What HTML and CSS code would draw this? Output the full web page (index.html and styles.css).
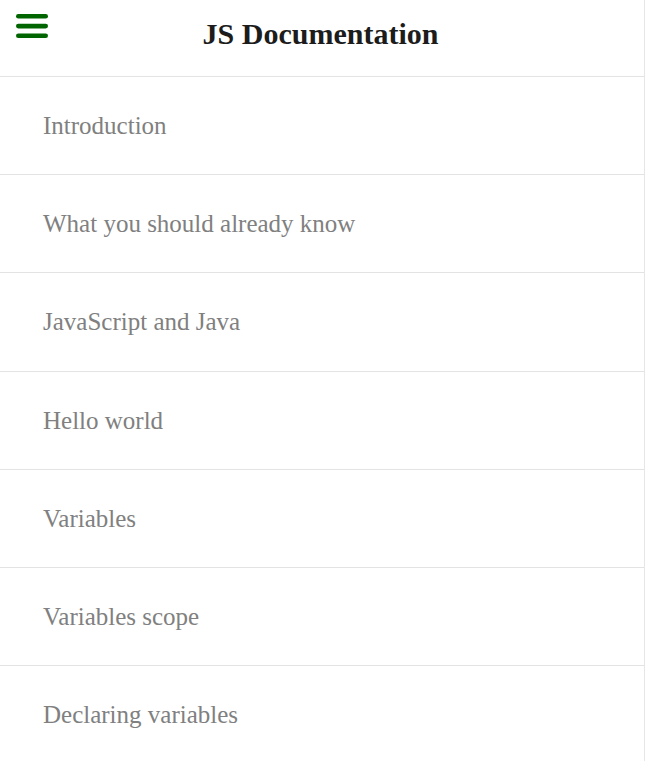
FILE: index.html
```html
<!DOCTYPE html>
<html lang="en">
<head>
<meta charset="utf-8">
<title>JS Documentation</title>
<link rel="stylesheet" href="styles.css">
</head>
<body>
<nav class="navbar" id="navbar">
  <header class="nav-header">
    <button class="menu-btn" aria-label="Menu">
      <svg width="32" height="24" viewBox="0 0 32 24" aria-hidden="true">
        <rect x="0" y="0" width="32" height="4.6" rx="2.3" fill="#006400"/>
        <rect x="0" y="9.8" width="32" height="4.6" rx="2.3" fill="#006400"/>
        <rect x="0" y="19.4" width="32" height="4.6" rx="2.3" fill="#006400"/>
      </svg>
    </button>
    <h1 class="title">JS Documentation</h1>
    <span></span>
  </header>
  <ul class="nav-list">
    <li class="nav-item"><a class="nav-link" href="#Introduction">Introduction</a></li>
    <li class="nav-item"><a class="nav-link" href="#What_you_should_already_know">What you should already know</a></li>
    <li class="nav-item"><a class="nav-link" href="#JavaScript_and_Java">JavaScript and Java</a></li>
    <li class="nav-item"><a class="nav-link" href="#Hello_world">Hello world</a></li>
    <li class="nav-item"><a class="nav-link" href="#Variables">Variables</a></li>
    <li class="nav-item"><a class="nav-link" href="#Variables_scope">Variables scope</a></li>
    <li class="nav-item"><a class="nav-link" href="#Declaring_variables">Declaring variables</a></li>
  </ul>
</nav>
</body>
</html>
```

FILE: styles.css
```css
html, body {
  margin: 0;
  padding: 0;
  background: #ffffff;
  overflow: hidden;
}

body {
  font-family: "Liberation Serif", "Times New Roman", serif;
}

.navbar {
  width: 645px;
  box-sizing: border-box;
  border-right: 1px solid #e6e6e6;
  min-height: 761px;
}

.nav-header {
  display: grid;
  grid-template-columns: 1fr auto 1fr;
  align-items: start;
  height: 76px;
  border-bottom: 1px solid #e3e3e3;
}

.menu-btn {
  justify-self: start;
  margin: 14px 0 0 16px;
  padding: 0;
  border: 0;
  background: none;
  line-height: 0;
  cursor: pointer;
}

.title {
  margin: 0 0 0 -3px;
  font-size: 30px;
  font-weight: bold;
  line-height: 68px;
  color: #1c1c1c;
  white-space: nowrap;
}

.nav-list {
  list-style: none;
  margin: 0;
  padding: 0;
}

.nav-item {
  border-bottom: 1px solid #e3e3e3;
}

.nav-link {
  display: block;
  padding: 34px 0 34px 43px;
  font-size: 25px;
  line-height: 29.17px;
  color: #808080;
  text-decoration: none;
}
```
